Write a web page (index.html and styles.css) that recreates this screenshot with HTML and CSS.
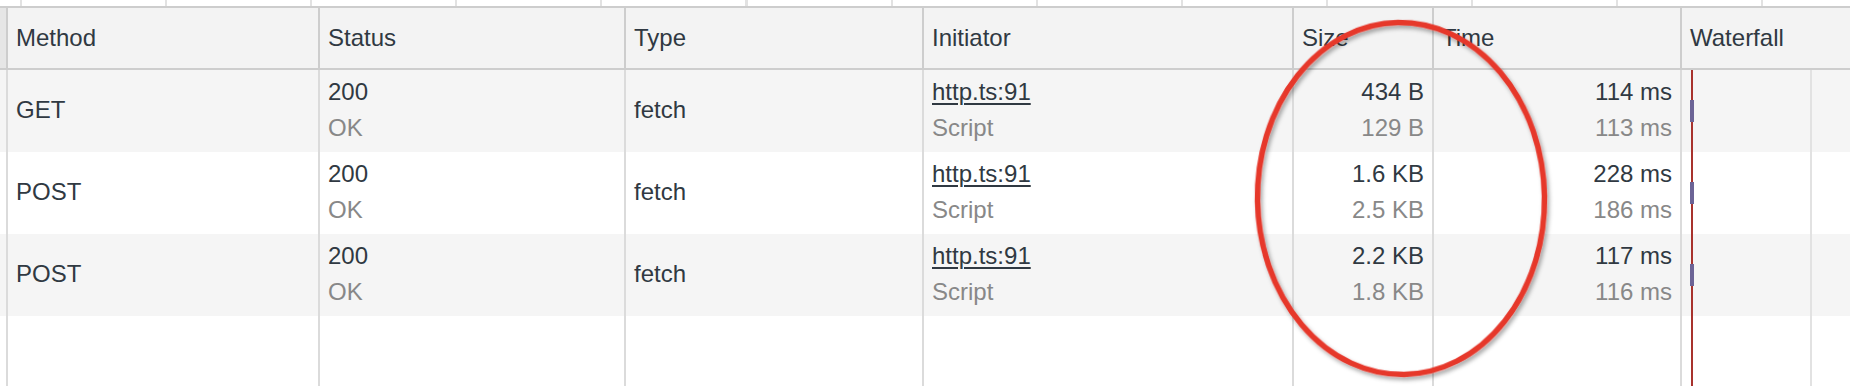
FILE: index.html
```html
<!DOCTYPE html>
<html lang="en">
<head>
    <meta charset="UTF-8">
    <meta name="viewport" content="width=device-width, initial-scale=1.0">
    <title>Network requests</title>
    <link rel="stylesheet" href="styles.css">
</head>
<body>
    <div class="panel">
        <div class="overview"></div>

        <div class="table">
            <div class="row head">
                <div class="cell stub"></div>
                <div class="cell">Method</div>
                <div class="cell">Status</div>
                <div class="cell">Type</div>
                <div class="cell">Initiator</div>
                <div class="cell">Size</div>
                <div class="cell">Time</div>
                <div class="cell">Waterfall</div>
            </div>

            <div class="row odd">
                <div class="cell stub"></div>
                <div class="cell">GET</div>
                <div class="cell two"><span>200</span><span class="sub">OK</span></div>
                <div class="cell">fetch</div>
                <div class="cell two"><a class="link">http.ts:91</a><span class="sub">Script</span></div>
                <div class="cell two num"><span>434 B</span><span class="sub">129 B</span></div>
                <div class="cell two num"><span>114 ms</span><span class="sub">113 ms</span></div>
                <div class="cell waterfall"><span class="bar"></span></div>
            </div>

            <div class="row">
                <div class="cell stub"></div>
                <div class="cell">POST</div>
                <div class="cell two"><span>200</span><span class="sub">OK</span></div>
                <div class="cell">fetch</div>
                <div class="cell two"><a class="link">http.ts:91</a><span class="sub">Script</span></div>
                <div class="cell two num"><span>1.6 KB</span><span class="sub">2.5 KB</span></div>
                <div class="cell two num"><span>228 ms</span><span class="sub">186 ms</span></div>
                <div class="cell waterfall"><span class="bar"></span></div>
            </div>

            <div class="row odd">
                <div class="cell stub"></div>
                <div class="cell">POST</div>
                <div class="cell two"><span>200</span><span class="sub">OK</span></div>
                <div class="cell">fetch</div>
                <div class="cell two"><a class="link">http.ts:91</a><span class="sub">Script</span></div>
                <div class="cell two num"><span>2.2 KB</span><span class="sub">1.8 KB</span></div>
                <div class="cell two num"><span>117 ms</span><span class="sub">116 ms</span></div>
                <div class="cell waterfall"><span class="bar"></span></div>
            </div>

            <div class="row filler">
                <div class="cell stub"></div>
                <div class="cell"></div>
                <div class="cell"></div>
                <div class="cell"></div>
                <div class="cell"></div>
                <div class="cell"></div>
                <div class="cell"></div>
                <div class="cell waterfall"></div>
            </div>
        </div>

        <!-- hand-drawn highlight around the Size column -->
        <svg class="annotation" width="1850" height="386" viewBox="0 0 1850 386">
            <defs>
                <filter id="shadow" x="-20%" y="-20%" width="140%" height="140%">
                    <feDropShadow dx="2" dy="3" stdDeviation="2" flood-color="#000" flood-opacity="0.35"/>
                </filter>
            </defs>
            <ellipse cx="1401" cy="198.5" rx="143.5" ry="176" transform="rotate(-1 1401 198.5)"
                     fill="none" stroke="#e6372c" stroke-width="5.5" filter="url(#shadow)"/>
        </svg>
    </div>
</body>
</html>
```

FILE: styles.css
```css
:root {
    --text-color: #303942;
    --text-secondary: #888888;
    --head-bg: #f3f3f3;
    --row-alt: #f5f5f5;
    --head-line: #cdcdcd;
    --body-line: #dbdbdb;
    --grid-line: #e2e2e2;
    --load-line: #a8322d;
    --wait-bar: #6c6496;
}

* {
    box-sizing: border-box;
    margin: 0;
    padding: 0;
}

body {
    font-family: "Liberation Sans", Arial, sans-serif;
    font-size: 24px;
    color: var(--text-color);
    background-color: #ffffff;
    overflow: hidden;
}

.panel {
    position: relative;
    height: 100vh;
    display: flex;
    flex-direction: column;
}

.overview {
    height: 8px;
    flex-shrink: 0;
    border-bottom: 2px solid var(--head-line);
    background-image: repeating-linear-gradient(to right, var(--grid-line) 0 2px, transparent 2px 145.1px);
    background-position: 20px 0;
}

.table {
    flex: 1;
    display: flex;
    flex-direction: column;
}

.row {
    display: grid;
    grid-template-columns: 6px 312px 306px 298px 370px 140px 248px 1fr;
    height: 82px;
    flex-shrink: 0;
}

.row.odd {
    background-color: var(--row-alt);
}

.row.head {
    height: 62px;
    background-color: var(--head-bg);
    border-bottom: 2px solid var(--head-line);
}

.row.filler {
    flex: 1;
}

.cell {
    display: flex;
    flex-direction: column;
    justify-content: center;
    padding: 0 8px 2px 8px;
    line-height: 36px;
    border-left: 2px solid var(--body-line);
    white-space: nowrap;
}

.head .cell {
    padding-bottom: 0;
    border-left-color: var(--head-line);
}

.cell.stub {
    border-left: none;
    padding: 0;
}

.head .cell.stub {
    background-color: #e6e6e6;
}

.cell.num {
    align-items: flex-end;
}

.sub {
    color: var(--text-secondary);
}

.link {
    color: var(--text-color);
    text-decoration: underline;
    text-decoration-thickness: 2px;
    text-underline-offset: 3px;
}

.cell.waterfall {
    justify-content: flex-start;
    padding: 0;
    background-image:
        linear-gradient(var(--load-line), var(--load-line)),
        linear-gradient(var(--grid-line), var(--grid-line));
    background-size: 2px 100%, 2px 100%;
    background-position: 9px 0, 128px 0;
    background-repeat: no-repeat;
}

.bar {
    display: block;
    width: 4px;
    height: 22px;
    margin: 30px 0 0 8px;
    background-color: var(--wait-bar);
}

.annotation {
    position: absolute;
    top: 0;
    left: 0;
    pointer-events: none;
}
```
